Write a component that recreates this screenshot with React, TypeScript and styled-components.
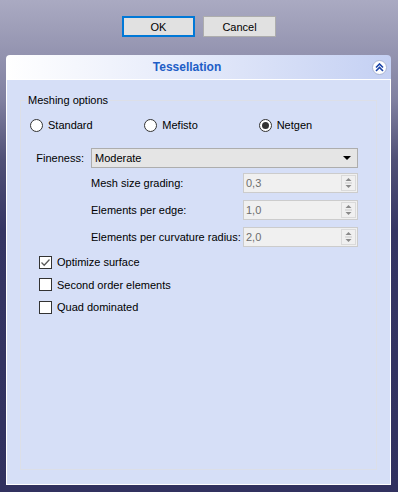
import React from "react";
import styled, { createGlobalStyle } from "styled-components";

const Global = createGlobalStyle`
  html, body { margin: 0; padding: 0; }
  body {
    font-family: "Liberation Sans", Arial, sans-serif;
    font-size: 11px;
    color: #000;
  }
  * { box-sizing: border-box; }
`;

const Page = styled.div`
  width: 398px;
  height: 492px;
  display: flex;
  flex-direction: column;
  background: linear-gradient(
    to bottom,
    rgb(170, 170, 194) 0px,
    rgb(128, 128, 160) 100px,
    rgb(80, 80, 118) 160px,
    rgb(53, 53, 99) 230px,
    rgb(49, 49, 95) 492px
  );
  overflow: hidden;
`;

const ButtonRow = styled.div`
  display: flex;
  justify-content: center;
  gap: 8px;
  padding-top: 16px;
`;

const DialogButton = styled.button<{ $default?: boolean }>`
  width: 73px;
  height: 21px;
  margin: 0;
  padding: 0;
  font-family: inherit;
  font-size: 11px;
  color: #000;
  background: #e1e1e1;
  border: ${(p) => (p.$default ? "2px solid #0078d7" : "1px solid #adadad")};
`;

const Panel = styled.section`
  flex: 1;
  display: flex;
  flex-direction: column;
  margin: 18px 7px 7px 6px;
`;

const Header = styled.div`
  height: 24px;
  display: flex;
  align-items: center;
  border-radius: 4px 4px 0 0;
  background: linear-gradient(to right, #ffffff 0%, #e6ebfa 45%, #c4d0f3 100%);
`;

const Title = styled.div`
  flex: 1;
  text-align: center;
  padding-right: 4px;
  font-size: 12px;
  font-weight: bold;
  color: #215dc6;
`;

const CollapseButton = styled.div`
  width: 15px;
  height: 15px;
  margin-right: 4px;
  border-radius: 50%;
  background: #ffffff;
  border: 1px solid #a9b4d2;
  display: flex;
  align-items: center;
  justify-content: center;
`;

const Body = styled.div`
  flex: 1;
  display: flex;
  flex-direction: column;
  background: #d6dff7;
  border: 1px solid #ffffff;
  padding: 14px 13px 14px 13px;
`;

const Group = styled.fieldset`
  flex: 1;
  margin: 0;
  padding: 0;
  min-width: 0;
  border: 1px solid #dcdfe8;
`;

const Legend = styled.legend`
  margin-left: 5px;
  padding: 0 2px;
  line-height: 13px;
`;

const RadioRow = styled.div`
  display: grid;
  grid-template-columns: repeat(3, 1fr);
  margin: 11px 3px 0 9px;
  height: 15px;
`;

const Choice = styled.label`
  display: flex;
  align-items: center;
  gap: 5px;
  line-height: 15px;
`;

const RadioCircle = styled.span<{ $checked?: boolean }>`
  width: 13px;
  height: 13px;
  border-radius: 50%;
  border: 1px solid #333333;
  background: #ffffff;
  display: flex;
  align-items: center;
  justify-content: center;
  &::after {
    content: "";
    width: 7px;
    height: 7px;
    border-radius: 50%;
    background: ${(p) => (p.$checked ? "#333333" : "transparent")};
  }
`;

const ParamGrid = styled.div`
  display: grid;
  grid-template-columns: 53px 267px;
  column-gap: 7px;
  margin: 15px 0 0 10px;
`;

const FieldLabel = styled.div`
  text-align: right;
  align-self: center;
`;

const Combo = styled.div`
  height: 20px;
  display: flex;
  align-items: center;
  justify-content: space-between;
  padding: 0 6px 0 3px;
  background: #e5e5e5;
  border: 1px solid #adadad;
`;

const SpinList = styled.div`
  grid-column: 2;
  display: flex;
  flex-direction: column;
  gap: 7px;
  margin-top: 5px;
`;

const SpinRow = styled.div`
  display: flex;
  align-items: center;
  justify-content: space-between;
`;

const SpinBox = styled.div`
  width: 115px;
  height: 20px;
  display: flex;
  align-items: center;
  justify-content: space-between;
  padding: 0 1px 0 2px;
  background: #f0f0f0;
  border: 1px solid #cccccc;
  color: #6d6d6d;
`;

const SpinButtons = styled.div`
  width: 15px;
  height: 16px;
  border: 1px solid #dadada;
  background: #f0f0f0;
  display: flex;
  align-items: center;
  justify-content: center;
`;

const CheckList = styled.div`
  display: flex;
  flex-direction: column;
  gap: 6.5px;
  margin: 7px 0 0 18px;
`;

const CheckRow = styled.label`
  display: flex;
  align-items: center;
  gap: 5px;
  height: 16px;
`;

const CheckBox = styled.span`
  width: 13px;
  height: 13px;
  border: 1px solid #333333;
  background: #ffffff;
  display: flex;
  align-items: center;
  justify-content: center;
`;

const ChevronsUp = () => (
  <svg width="9" height="9" viewBox="0 0 9 9">
    <path d="M1 4.5 L4.5 1 L8 4.5 M1 8 L4.5 4.5 L8 8" fill="none" stroke="#1a43a8" strokeWidth="1.6" />
  </svg>
);

const DownArrow = () => (
  <svg width="8" height="4" viewBox="0 0 8 4">
    <path d="M0 0 H8 L4 4 Z" fill="#000" />
  </svg>
);

const SpinArrows = () => (
  <svg width="7" height="12" viewBox="0 0 7 12">
    <path d="M0.5 4 L3.5 1 L6.5 4 Z" fill="#8a8a8a" />
    <path d="M0 6 H7" stroke="#c8c8c8" strokeWidth="1" />
    <path d="M0.5 8 L3.5 11 L6.5 8 Z" fill="#8a8a8a" />
  </svg>
);

const Tick = () => (
  <svg width="11" height="11" viewBox="0 0 11 11">
    <path d="M1.5 5.5 L4.2 8.2 L9.5 2.5" fill="none" stroke="#5a5a5a" strokeWidth="1.3" />
  </svg>
);

const spins = [
  { label: "Mesh size grading:", value: "0,3" },
  { label: "Elements per edge:", value: "1,0" },
  { label: "Elements per curvature radius:", value: "2,0" },
];

const radios = [
  { label: "Standard", checked: false },
  { label: "Mefisto", checked: false },
  { label: "Netgen", checked: true },
];

const checks = [
  { label: "Optimize surface", checked: true },
  { label: "Second order elements", checked: false },
  { label: "Quad dominated", checked: false },
];

export default function App() {
  return (
    <Page>
      <Global />
      <ButtonRow>
        <DialogButton $default>OK</DialogButton>
        <DialogButton>Cancel</DialogButton>
      </ButtonRow>
      <Panel>
        <Header>
          <Title>Tessellation</Title>
          <CollapseButton>
            <ChevronsUp />
          </CollapseButton>
        </Header>
        <Body>
          <Group>
            <Legend>Meshing options</Legend>
            <RadioRow>
              {radios.map((r) => (
                <Choice key={r.label}>
                  <RadioCircle $checked={r.checked} />
                  {r.label}
                </Choice>
              ))}
            </RadioRow>
            <ParamGrid>
              <FieldLabel>Fineness:</FieldLabel>
              <Combo>
                <span>Moderate</span>
                <DownArrow />
              </Combo>
              <SpinList>
                {spins.map((s) => (
                  <SpinRow key={s.label}>
                    <span>{s.label}</span>
                    <SpinBox>
                      <span>{s.value}</span>
                      <SpinButtons>
                        <SpinArrows />
                      </SpinButtons>
                    </SpinBox>
                  </SpinRow>
                ))}
              </SpinList>
            </ParamGrid>
            <CheckList>
              {checks.map((c) => (
                <CheckRow key={c.label}>
                  <CheckBox>{c.checked && <Tick />}</CheckBox>
                  {c.label}
                </CheckRow>
              ))}
            </CheckList>
          </Group>
        </Body>
      </Panel>
    </Page>
  );
}
